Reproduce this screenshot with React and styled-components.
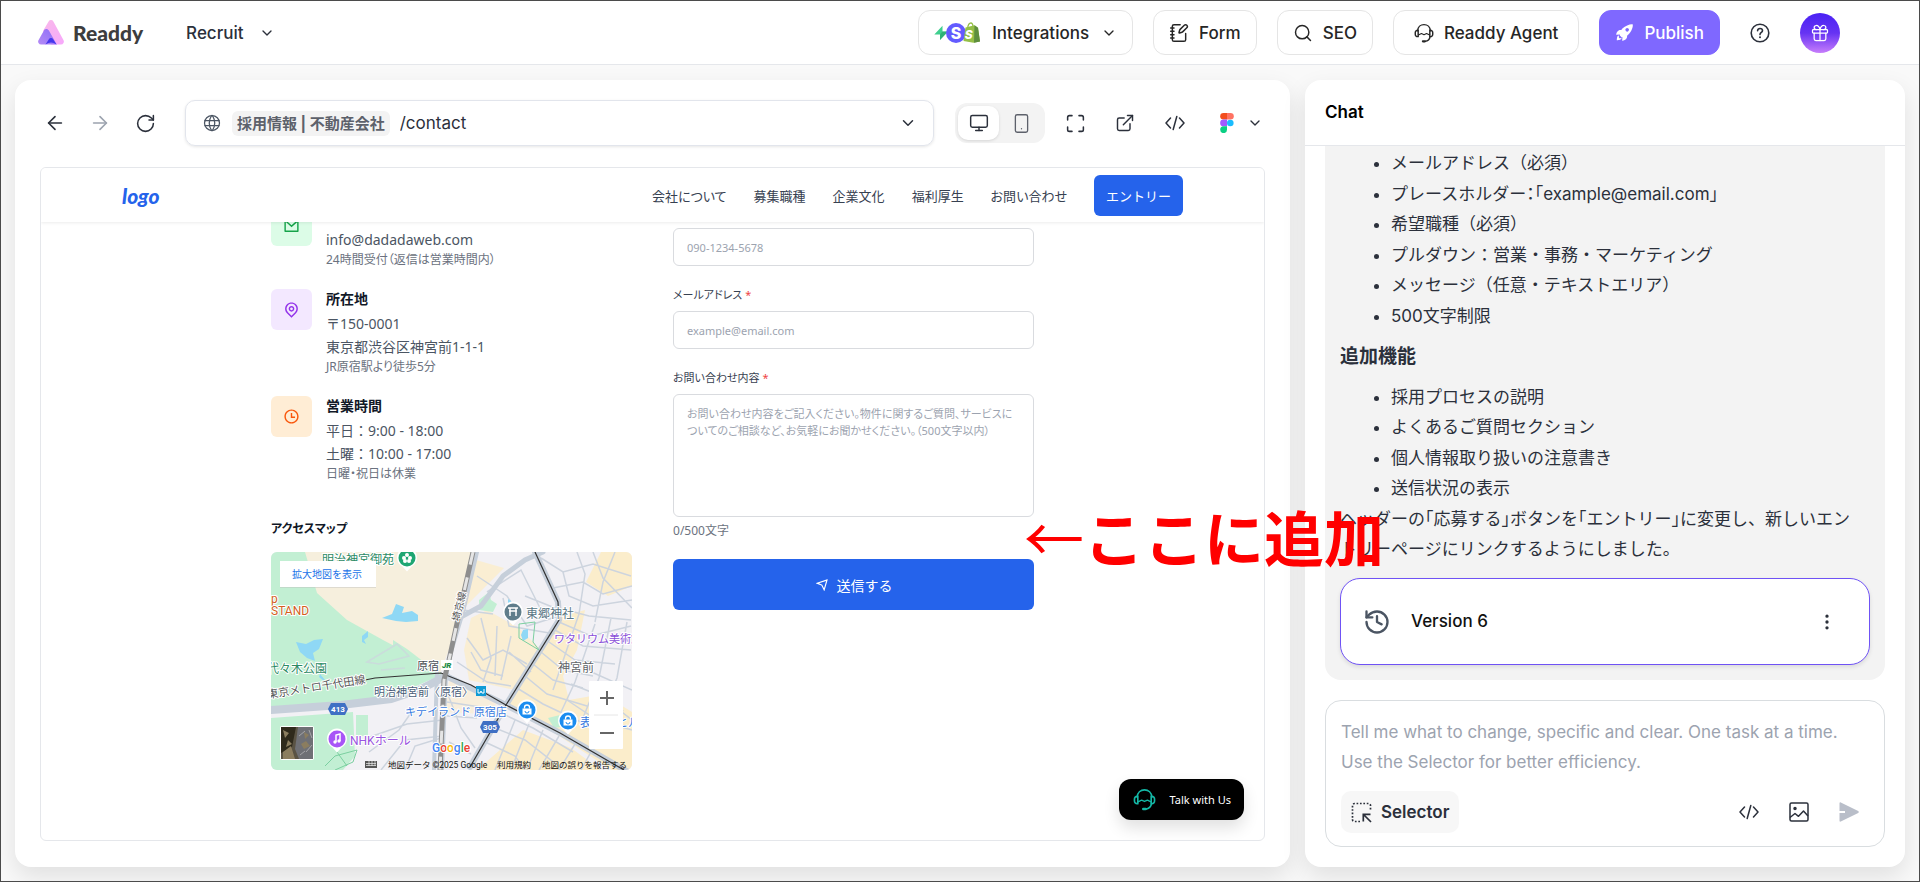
import React, { useState } from "react";
import styled, { createGlobalStyle, css } from "styled-components";
import {
  ArrowLeft,
  ArrowRight,
  RotateCw,
  ChevronDown,
  Monitor,
  Smartphone,
  Maximize,
  ExternalLink,
  Search,
  NotebookPen,
  Gift,
  History,
  EllipsisVertical
} from "lucide-react";
import { RiMailLine, RiMapPinLine, RiTimeLine, RiSendPlaneLine } from "react-icons/ri";
import { TbWorld } from "react-icons/tb";
import { IoRocketSharp } from "react-icons/io5";

const uiFont = `Inter, "Noto Sans CJK JP", sans-serif`;
const siteFont = `"Noto Sans", "Noto Sans CJK JP", sans-serif`;

const GlobalStyle = createGlobalStyle`
  *, *::before, *::after {
    box-sizing: border-box;
  }
  body {
    margin: 0;
    font-family: ${uiFont};
    color: #2b303b;
  }
  button, input, textarea {
    font-family: inherit;
    font-size: inherit;
    color: inherit;
  }
  button {
    padding: 0;
    border: 0;
    background: none;
    cursor: pointer;
  }
`;

/* ---------- shell ---------- */

const Page = styled.div`
  display: flex;
  flex-direction: column;
  height: 100vh;
  min-height: 700px;
  border: 1px solid #4b4b4b;
  background: #f9f9f9;
  overflow: hidden;
`;

const TopBar = styled.header`
  display: flex;
  align-items: center;
  height: 64px;
  flex-shrink: 0;
  padding: 0 79px 0 37px;
  background: #fff;
  border-bottom: 1px solid #e5e7eb;
  font-size: 17px;
  font-weight: 500;
`;

const Brand = styled.a`
  display: flex;
  align-items: center;
  gap: 9px;
  color: #3d3d3d;
  font-family: Lato, sans-serif;
  font-size: 21px;
  font-weight: 900;
  text-decoration: none;
`;

const ProjectButton = styled.button`
  display: flex;
  align-items: center;
  gap: 15px;
  margin-left: 43px;
  font-weight: 500;
`;

const TopActions = styled.div`
  display: flex;
  align-items: center;
  gap: 20px;
  margin-left: auto;
`;

const TopButton = styled.button`
  display: flex;
  align-items: center;
  gap: ${props => (props.$menu ? "12px" : "10px")};
  height: 45px;
  padding: 0 ${props => (props.$wide ? "20px" : "15px")};
  border: 1px solid #e5e5e5;
  border-radius: 12px;
  background: #fff;
  color: #262626;
  font-weight: 500;
  ${props =>
    props.$primary &&
    css`
      border-color: #7f68ff;
      background: #7f68ff;
      color: #fff;
    `}
`;

const HelpButton = styled.button`
  display: flex;
  margin: 0 10px;
`;

const GiftButton = styled.button`
  display: flex;
  align-items: center;
  justify-content: center;
  width: 40px;
  height: 40px;
  border-radius: 50%;
  background: linear-gradient(#4a22f4 0%, #6633f3 50%, #c77dfb 100%);
  color: #fff;
`;

const Main = styled.main`
  display: flex;
  flex: 1;
  gap: 15px;
  min-height: 0;
  padding: 15px 14px 14px;
`;

const Panel = styled.section`
  display: flex;
  flex-direction: column;
  min-width: 0;
  min-height: 0;
  border-radius: 16px;
  background: #fff;
  box-shadow: 0 10px 24px rgba(0, 0, 0, 0.1);
`;

/* ---------- preview panel ---------- */

const PreviewPanel = styled(Panel)`
  flex: 1;
  gap: 21px;
  padding: 20px 25px 26px;
`;

const Toolbar = styled.div`
  display: flex;
  align-items: center;
  gap: 21px;
`;

const NavButtons = styled.div`
  display: flex;
  gap: 15px;
  margin-right: 4px;
`;

const IconButton = styled.button`
  display: flex;
  align-items: center;
  justify-content: center;
  width: 30px;
  height: 30px;
  color: ${props => (props.disabled ? "#9ca3af" : "#2b303b")};
`;

const AddressBar = styled.div`
  display: flex;
  align-items: center;
  flex: 1;
  min-width: 0;
  height: 46px;
  padding: 0 16px;
  border: 1px solid #e2e5ec;
  border-radius: 10px;
  box-shadow: 0 1px 3px rgba(0, 0, 0, 0.1);
  color: #4b5563;
`;

const SiteChip = styled.span`
  margin: 0 10px;
  padding: 0 5px;
  border-radius: 6px;
  background: #f3f3f3;
  color: #5d616b;
  font-size: 15px;
  font-weight: 700;
  line-height: 25px;
  white-space: nowrap;
`;

const PathInput = styled.input`
  flex: 1;
  min-width: 0;
  padding: 0;
  border: 0;
  outline: none;
  background: none;
  color: #2b303b;
  font-size: 17px;
`;

const DeviceSwitch = styled.div`
  display: flex;
  align-items: center;
  gap: 2px;
  padding: 3px;
  border-radius: 12px;
  background: #f3f3f3;
`;

const DeviceButton = styled.button`
  display: flex;
  align-items: center;
  justify-content: center;
  width: 41px;
  height: 34px;
  border-radius: 10px;
  color: #5d616b;
  ${props =>
    props.$active &&
    css`
      background: #fff;
      box-shadow: 0 1px 3px rgba(0, 0, 0, 0.12);
      color: #2b303b;
    `}
`;

const ToolIcons = styled.div`
  display: flex;
  align-items: center;
  gap: 20px;
  margin-left: -6px;
`;

const FigmaButton = styled.button`
  display: flex;
  align-items: center;
  gap: 13px;
  padding: 0 2px 0 10px;
`;

const Frame = styled.div`
  position: relative;
  flex: 1;
  min-height: 0;
  overflow: hidden;
  border: 1px solid #e5e7eb;
  border-radius: 6px;
  font-family: ${siteFont};
  font-size: 14px;
  color: #374151;
`;

const SiteHeader = styled.header`
  position: relative;
  z-index: 1;
  display: flex;
  justify-content: center;
  background: #fff;
  box-shadow: 0 1px 3px rgba(0, 0, 0, 0.08);
`;

const SiteHeaderInner = styled.div`
  display: flex;
  align-items: center;
  justify-content: space-between;
  flex: 1;
  max-width: 1061px;
  height: 54px;
`;

const SiteLogo = styled.a`
  color: #2563eb;
  font-family: Lato, sans-serif;
  font-size: 21px;
  font-style: italic;
  font-weight: 900;
  text-decoration: none;
`;

const SiteNav = styled.nav`
  display: flex;
  align-items: center;
  gap: 27px;
  font-size: 13px;
  font-feature-settings: "palt";

  a {
    color: #374151;
    text-decoration: none;
  }
`;

const EntryButton = styled.button`
  width: 89px;
  height: 41px;
  border-radius: 6px;
  background: #2563eb;
  color: #fff;
`;

const SiteBody = styled.div`
  display: grid;
  grid-template-columns: 1fr 1fr;
  gap: 41px;
  max-width: 763px;
  /* scrolled so that the first rows pass under the header */
  margin: -17px auto 0;
`;

const ContactList = styled.div`
  display: flex;
  flex-direction: column;
  gap: 20px;
`;

const ContactItem = styled.div`
  display: flex;
  align-items: flex-start;
  gap: 14px;
`;

const ContactBadge = styled.span`
  display: flex;
  align-items: center;
  justify-content: center;
  width: 41px;
  height: 41px;
  border-radius: 6px;
  background: ${props => props.$bg};
  color: ${props => props.$color};
`;

const ContactText = styled.div`
  color: #4b5563;
  font-size: 14px;
  line-height: 23px;
`;

const ContactTitle = styled.h3`
  height: 20px;
  margin: 0 0 3px;
  color: #111827;
  font-size: 14px;
  font-weight: 700;
  line-height: 20px;
`;

const ContactNote = styled.div`
  color: #6b7280;
  font-size: 12px;
  line-height: 18px;
  font-feature-settings: "palt";
`;

const MapTitle = styled.h3`
  margin: 36px 0 13px;
  color: #111827;
  font-size: 12px;
  font-weight: 700;
  line-height: 20px;
  font-feature-settings: "palt";
`;

const MapBox = styled.div`
  height: 218px;
  overflow: hidden;
  border-radius: 6px;

  svg {
    display: block;
    width: 100%;
    height: 100%;
  }
`;

const ContactForm = styled.form`
  display: flex;
  flex-direction: column;
  padding-top: 23px;
`;

const FieldLabel = styled.label`
  margin: 19px 0 6px;
  color: #374151;
  font-size: 11px;
  line-height: 20px;
  font-feature-settings: "palt";
`;

const Required = styled.span`
  margin-left: 3px;
  color: #ef4444;
`;

const fieldStyle = css`
  width: 100%;
  padding: 0 13px;
  border: 1px solid #d9dbdf;
  border-radius: 6px;
  outline: none;
  background: #fff;
  font-size: 11px;

  &::placeholder {
    color: #9ca3af;
    opacity: 1;
  }
`;

const TextField = styled.input`
  ${fieldStyle}
  height: 38px;
`;

const MessageField = styled.textarea`
  ${fieldStyle}
  height: 123px;
  padding: 10px 13px;
  line-height: 17px;
  font-feature-settings: "palt";
  resize: none;
`;

const Counter = styled.div`
  margin-top: 6px;
  color: #6b7280;
  font-size: 12px;
  line-height: 16px;
`;

const SubmitButton = styled.button`
  display: flex;
  align-items: center;
  justify-content: center;
  gap: 8px;
  height: 51px;
  margin-top: 20px;
  border-radius: 6px;
  background: #2563eb;
  color: #fff;
  font-size: 14px;
`;

const TalkButton = styled.button`
  position: absolute;
  right: 20px;
  bottom: 20px;
  display: flex;
  align-items: center;
  gap: 14px;
  height: 41px;
  padding: 0 13px 0 14px;
  border-radius: 12px;
  background: #000;
  box-shadow: 0 8px 16px rgba(0, 0, 0, 0.12);
  color: #fff;
  font-size: 11px;

  svg {
    color: #14b8a6;
  }
`;

/* ---------- chat panel ---------- */

const ChatPanel = styled(Panel)`
  flex: 0 0 600px;
`;

const ChatTitle = styled.h2`
  flex-shrink: 0;
  margin: 0;
  padding: 0 20px;
  border-bottom: 1px solid #e5e7eb;
  color: #000;
  font-size: 17px;
  font-weight: 600;
  line-height: 65px;
`;

const ChatBody = styled.div`
  display: flex;
  flex-direction: column;
  flex: 1;
  gap: 20px;
  min-height: 0;
  padding: 0 20px 20px;
`;

const Bubble = styled.div`
  display: flex;
  flex-direction: column;
  justify-content: flex-end;
  flex: 1;
  min-height: 0;
  overflow: hidden;
  padding: 0 15px 15px;
  border-radius: 0 0 16px 16px;
  background: #f3f3f3;
  font-size: 17px;
  line-height: 1.8;
`;

const BulletList = styled.ul`
  margin: 0;
  padding-left: 51px;
`;

const BubbleHeading = styled.h3`
  margin: 10px 0;
  font-size: 19px;
  line-height: 30px;
  font-weight: 700;
`;

const BubbleText = styled.p`
  margin: 0;
  padding-right: 12px;
  line-height: 30px;
`;

const Quote = styled.span`
  font-feature-settings: "halt";
`;

const VersionCard = styled.div`
  display: flex;
  align-items: center;
  gap: 20px;
  height: 87px;
  flex-shrink: 0;
  margin-top: 14px;
  padding: 0 27px 0 22px;
  border: 1px solid #6f52f5;
  border-radius: 20px;
  background: #fff;
  box-shadow: 0 2px 4px rgba(0, 0, 0, 0.1);
  color: #111;
  font-size: 17px;
  font-weight: 500;
`;

const MoreButton = styled(IconButton)`
  margin-left: auto;
`;

const Composer = styled.form`
  flex-shrink: 0;
  height: 147px;
  padding: 16px 15px 12px;
  border: 1px solid #d9dde0;
  border-radius: 16px;
`;

const Prompt = styled.textarea`
  display: block;
  width: 100%;
  height: 60px;
  margin-bottom: 14px;
  padding: 0;
  border: 0;
  outline: none;
  resize: none;
  font-size: 17px;
  line-height: 30px;

  &::placeholder {
    color: #9ca3af;
    opacity: 1;
  }
`;

const ComposerActions = styled.div`
  display: flex;
  align-items: center;
  gap: 20px;
  padding-right: 5px;
`;

const SelectorButton = styled.button`
  display: flex;
  align-items: center;
  gap: 9px;
  height: 42px;
  margin-right: auto;
  padding: 0 10px;
  border-radius: 10px;
  background: #f7f7f7;
  font-size: 17px;
  font-weight: 600;
`;

/* ---------- marked-up note over the page ---------- */

const Callout = styled.div`
  position: absolute;
  top: 492px;
  right: 536px;
  color: #f00;
  font-family: "Noto Sans CJK JP", sans-serif;
  font-size: 60px;
  font-weight: 700;
  line-height: 88px;
  white-space: nowrap;
  pointer-events: none;
`;

const CalloutArrow = styled.span`
  font-weight: 400;
`;

/* ---------- drawings ---------- */

const BrandMark = () => (
  <svg width="26" height="25" viewBox="0 0 26 25">
    <defs>
      <linearGradient id="markPink" x1="0" y1="0" x2="1" y2="1">
        <stop offset="0" stopColor="#f9b9ea" />
        <stop offset="1" stopColor="#f7a8fb" />
      </linearGradient>
      <linearGradient id="markViolet" x1="0" y1="1" x2="1" y2="0">
        <stop offset="0" stopColor="#b58bf5" />
        <stop offset="1" stopColor="#8a6cf8" />
      </linearGradient>
    </defs>
    <path d="M10.6 1.4a2.8 2.8 0 0 1 4.8 0l10 18.6a3 3 0 0 1-2.5 4.6H13L5 11z" fill="url(#markPink)" />
    <path d="M6.5 9.6c1.5-1.2 3.4-.8 4.4.9l7.9 14.1H3.2A3 3 0 0 1 .6 20z" fill="url(#markViolet)" />
    <path d="M7.5 24.6l3.2-5.2a2.6 2.6 0 0 1 4.6 0l3.2 5.2c-2-1.3-3.7-2-5.5-2s-3.5.7-5.5 2z" fill="#4636ee" />
  </svg>
);

const IntegrationLogos = () => (
  <svg width="46" height="22" viewBox="0 0 46 22" aria-hidden="true">
    <path d="M8.5 3.8v5.800H14L6 18v-5.600H.3z" fill="#3ecf8e" />
    <path d="M6 12.4V18l8-8.400H8.500z" fill="#249d68" opacity=".6" />
    <circle cx="22" cy="11" r="10" fill="#635bff" />
    <text x="22" y="17" textAnchor="middle" fontFamily="Inter" fontWeight="800" fontSize="16" fill="#fff">
      S
    </text>
    <path d="M31.500 5.500l9-2.300 3.500 2.600L46 19.500l-6.500 1.300L29.500 19z" fill="#95bf47" />
    <path d="M40.500 3.200l3.500 2.600L46 19.500l-6 1.300z" fill="#5e8e3e" />
    <path d="M33.500 6.500c.5-3.500 2-5.500 3.400-5.500 1.300 0 2 1.700 2.200 4" fill="none" stroke="#95bf47" strokeWidth="1.300" />
    <text x="34.800" y="17" textAnchor="middle" fontFamily="Inter" fontWeight="800" fontSize="12" fontStyle="italic" fill="#fff">
      S
    </text>
  </svg>
);

const Headset = ({ size = 20 }) => (
  <svg
    width={size}
    height={size}
    viewBox="0 0 22 22"
    fill="none"
    stroke="currentColor"
    strokeWidth="1.6"
    strokeLinecap="round"
    strokeLinejoin="round"
  >
    <path d="M4 8.500C4.300 4.500 7.200 1.800 11 1.800s6.700 2.700 7 6.700" />
    <path d="M4.600 8H4a2.600 2.600 0 0 0-2.600 2.700v1.600A2.600 2.600 0 0 0 4 15h.6z" />
    <path d="M17.400 8h.6a2.600 2.600 0 0 1 2.600 2.700v1.600A2.600 2.600 0 0 1 18 15h-.6z" />
    <path d="M4.800 13.200l3.400-1.600 2.800 1.300 2.800-1.300 3.400 1.600" strokeWidth="1.300" />
    <path d="M17.600 15.200c-.4 2.700-2.600 4.600-5.400 5" />
    <path d="M9.800 20.200h2.200" strokeWidth="2.400" />
  </svg>
);

const HelpIcon = () => (
  <svg
    width="20"
    height="20"
    viewBox="0 0 20 20"
    fill="none"
    stroke="currentColor"
    strokeWidth="1.600"
    strokeLinecap="round"
    strokeLinejoin="round"
  >
    <circle cx="10" cy="10" r="8.800" />
    <path d="M7.600 7.800C7.600 6.400 8.600 5.500 10 5.500s2.500.9 2.500 2.200c0 1.700-2.500 1.900-2.500 3.900" />
    <path d="M10 14.200v.1" strokeWidth="2" />
  </svg>
);

const CodeIcon = () => (
  <svg
    width="20"
    height="16"
    viewBox="0 0 20 16"
    fill="none"
    stroke="currentColor"
    strokeWidth="1.500"
    strokeLinecap="round"
    strokeLinejoin="round"
  >
    <path d="M5.500 3L1 8l4.500 5M14.500 3L19 8l-4.500 5M11.800 1.500L8.200 14.500" />
  </svg>
);

const FigmaLogo = () => (
  <svg width="14" height="20" viewBox="0 0 14 20">
    <path d="M3.500 0H7v6.600H3.500a3.300 3.300 0 0 1 0-6.600z" fill="#f24e1e" />
    <path d="M7 0h3.500a3.300 3.300 0 0 1 0 6.600H7z" fill="#ff7262" />
    <path d="M3.500 6.600H7v6.700H3.500a3.300 3.300 0 0 1 0-6.700z" fill="#a259ff" />
    <circle cx="10.300" cy="10" r="3.300" fill="#1abcfe" />
    <path d="M3.500 13.300H7v3.400a3.400 3.400 0 1 1-3.500-3.400z" fill="#0acf83" />
  </svg>
);

const SelectorIcon = () => (
  <svg width="21" height="21" viewBox="0 0 21 21" fill="none" stroke="currentColor" strokeWidth="1.700">
    <path
      d="M9 19.500H3.500a2 2 0 0 1-2-2v-14a2 2 0 0 1 2-2h14a2 2 0 0 1 2 2V9"
      strokeDasharray="1.700 1.700"
    />
    <path d="M12.300 19.500v-7.200h7.200M12.500 12.500l7.500 7.500" />
  </svg>
);

const ImageIcon = () => (
  <svg
    width="20"
    height="20"
    viewBox="0 0 20 20"
    fill="none"
    stroke="currentColor"
    strokeWidth="1.500"
    strokeLinejoin="round"
  >
    <rect x="1" y="1" width="18" height="18" rx="1.500" />
    <path d="M1 15.500l5-4 3.500 2.800 5-5.300 4.500 5" />
    <circle cx="6" cy="6.500" r="1" fill="currentColor" />
  </svg>
);

const SendIcon = () => (
  <svg width="20" height="20" viewBox="0 0 20 20" fill="#b9bec9">
    <path d="M.5 1.300C.5.500 1 0 1.800.4l17.400 8.700c.8.400.8 1.400 0 1.800L1.800 19.600c-.8.400-1.300-.1-1.300-.9V11H6V9H.5z" />
  </svg>
);

const MapPin = ({ x, y, color, children }) => (
  <g transform={`translate(${x} ${y})`}>
    <path d="M0 13.500l-4.500-5A10 10 0 1 1 4.500 8.500z" fill="#fff" />
    <circle r="8.500" fill={color} />
    {children}
  </g>
);

const ShopBag = () => (
  <g>
    <rect x="-4.500" y="-1.500" width="9" height="6" fill="#fff" />
    <path d="M-2.500-1.500v-1a2.500 2.500 0 0 1 5 0v1" fill="none" stroke="#fff" strokeWidth="1.300" />
    <path d="M-2 1a2 2 0 0 0 4 0" fill="none" stroke="#1a8cf0" />
  </g>
);

const RouteShield = ({ x, y, label }) => (
  <g transform={`translate(${x} ${y})`}>
    <path d="M-7-6H7l3 6-3 6H-7l-3-6z" fill="#3f6fc4" />
    <text y="3" textAnchor="middle" fontSize="8" fontWeight="700" fill="#fff" stroke="none">
      {label}
    </text>
  </g>
);

const AccessMap = () => (
  <svg
    viewBox="0 0 361 218"
    preserveAspectRatio="xMidYMid slice"
    fontFamily={`Roboto, "Noto Sans CJK JP", sans-serif`}
    fontSize="12"
  >
    <rect width="361" height="218" fill="#f2f1f5" />
    {/* commercial blocks */}
    <g fill="#fbedcb">
      <path d="M205 8l28 8-30 30-12 12 6-30zM200 66l16-8 32 18 22 22 10 30-36 10-46-10-5-30z" opacity=".8" />
      <path d="M286 66l28-8-8 40-14 26 6 24 34-6 29 18v58h-20L238 152z" />
      <path d="M330 0h31v34l-24 10-22-14zM252 178l48 18 30 22H206z" />
      <path d="M178 128l48 24-14 10-38-2z" opacity=".6" />
    </g>
    {/* parks */}
    <path d="M0 0h40l24 42 28 26 30 18 20 16 30 20-40 18-26 10L0 156z" fill="#c2efd3" />
    <path d="M34 0h167l-12 55-10 40-10 26-30-4-10-20-17-9-36-20-30-27z" fill="#f6efdd" />
    <path d="M122 88l14 9 34 26-20 8-28-16z" fill="#c2efd3" />
    <path d="M0 166l82-6 2 44-12 14H0zM85 163h12v20l-12 2z" fill="#c2efd3" />
    <path d="M208 48l10-8 2 8 6 4-4 8-14-2z" fill="#c2efd3" />
    <path d="M277 166l16-4 4 12-14 2z" fill="#c2efd3" />
    {/* side streets */}
    <g fill="none" stroke="#cdd4de" strokeWidth="1.500">
      <path d="M270 6l22 14 30-8 38 12M282 36l30-6 20 12 29-8M292 20l6 24 24 10 39-6M306 0l8 22-6 40M322 0l10 26 29 30M344 0l-12 30-8 40M288 56l30 8 42 4M288 70l32 14 40-10M284 78l28 16 48 4M278 90l26 18 40 4M270 100l22 18 30 6M262 112l20 16 30 8M254 124l22 18 40 12M246 136l26 16 38 18M308 62l-26 76M324 72l-20 58-14 30M340 66l-12 60-16 40M356 70l-10 56-20 46" />
      <path d="M196 86l16 22 20-10 24 14M200 100l10 18 22 6M210 66l10 40-8 24M226 74l-2 50M240 84l-10 44M186 110l30 20 24 4M206 24l30 20 20 30 32-10M216 40l34-22 20 40M232 46l6 28 46 8M192 58l30 4M254 44l30 12M238 100l22 20" />
      <path d="M232 162l30 14 40 24M224 176l30 12 36 28M214 190l30 14 10 14M244 168l-20 50M258 172l-18 46M272 178l-16 40M288 184l-20 34M304 192l-16 26M320 200l-10 18M300 132l30 12 31 24M316 118l45 20M296 148l30 20 35 10M318 174l20-30M340 184l12-26" />
      <path d="M96 186l40-14 36-4M98 200l30-22 14-20M110 218l24-30 38-4M134 218l10-24 26-8M176 150l40 6M176 164l30 2M178 190l22 12M176 140l14 36 14 20" />
      <path d="M96 110l30-18 12 12-30 8zM110 118l24-2" opacity=".7" />
    </g>
    {/* main roads */}
    <g fill="none" stroke="#c6cfda" strokeLinecap="round">
      <path d="M0 158l70-5 50-6 30-10 25-13" strokeWidth="8" />
      <path d="M175 124l60 29 54 28 70 40" strokeWidth="6" />
      <path d="M264 0l23 50 1 18-53 85-36 62" strokeWidth="6" />
      <path d="M188 66l22-12 22-30 22-16 18-8" strokeWidth="5" />
      <path d="M206 0l-14 60-12 40-5 24-4 94" strokeWidth="4" />
      <path d="M166 120l-3 98" strokeWidth="4" />
    </g>
    <g fill="none" stroke="#333" strokeWidth="1.200">
      <path d="M84 130l20-4 66-5 30 12 35 20 54 28 64 37" />
      <path d="M264 0l23 50 1 18-53 85-36 62" />
    </g>
    <path d="M202 0l-14 62-10 46-5 20-4 90" fill="none" stroke="#8e8e8e" strokeWidth="5" />
    <path d="M202 0l-14 62-10 46-5 20-4 90" fill="none" stroke="#e5e5e5" strokeWidth="3" strokeDasharray="13 13" />
    {/* water */}
    <g fill="#8fd8f5">
      <path d="M111 66l10-4 4-10 8 3-2 6 10-2 6 4v6l-12 1-10-1z" />
      <path d="M25 90l10 2 8-4 9-1-4 10-6 4 2 8-8-3-7-6z" />
      <path d="M91 84l6-5v6l-4 3 2 4-4-2zM49 122l5 6-1 1-5-4zM252 78l5-1v9l-5 3-2-6zM237 47l3 2 1 7-4-4z" />
    </g>
    <path d="M248 72l16-2-2 20 6 8-20-12zM54 214l10-10 22-6-4 12-18 8M66 200l10 14" fill="none" stroke="#7bcfa0" strokeWidth="1" />

    {/* labels */}
    <g stroke="#fff" strokeWidth="2" paintOrder="stroke" strokeLinejoin="round">
      <text x="51" y="12" fill="#2b8a64">明治神宮御苑</text>
      <text x="0" y="51" fill="#d35f1e">p</text>
      <text x="0" y="63" fill="#d35f1e">STAND</text>
      <text x="-4" y="121" fill="#2b8a64">代々木公園</text>
      <text x="-3" y="146" fontSize="11" fill="#555" transform="rotate(-9 0 146)">東京メトロ千代田線</text>
      <text x="188" y="70" fontSize="10" fill="#555" transform="rotate(-76 188 70)">埼京線</text>
      <text x="255" y="66" fill="#5a7684">東郷神社</text>
      <text x="283" y="91" fontSize="11" fill="#8a4fd8">ワタリウム美術館</text>
      <text x="287" y="120" fill="#606468">神宮前</text>
      <text x="146" y="118" fontSize="11" fill="#4a4f57">原宿</text>
      <text x="103" y="144" fontSize="11" fill="#4a5d78">明治神宮前〈原宿〉</text>
      <text x="134" y="164" fontSize="11" fill="#3a7be0">キデイランド 原宿店</text>
      <text x="309" y="175" fill="#3a7be0">表参道ヒルズ</text>
      <text x="79" y="193" fill="#9a54e0">NHKホール</text>
    </g>
    <rect x="170" y="108" width="12" height="10" fill="#fff" />
    <text x="171" y="116" fontSize="8" fontWeight="900" fontStyle="italic" fill="#1c8a45">JR</text>
    <rect x="205" y="134" width="10" height="10" fill="#0f9bd6" />
    <path d="M207 137v4h2l1-2 1 2h2v-4" fill="none" stroke="#fff" />
    <MapPin x={136} y={6} color="#1fa673">
      <g fill="#fff">
        <circle cy="-3" r="2" />
        <circle cx="3" r="2" />
        <circle cx="-3" r="2" />
        <circle cx="2" cy="3" r="2" />
        <circle cx="-2" cy="3" r="2" />
      </g>
    </MapPin>
    <MapPin x={242} y={60} color="#607d8b">
      <path d="M-5-4H5M-4-1H4M-3-4v8M3-4v8" stroke="#fff" strokeWidth="1.500" />
    </MapPin>
    <MapPin x={256} y={158} color="#1a8cf0">
      <ShopBag />
    </MapPin>
    <MapPin x={297} y={169} color="#1a8cf0">
      <ShopBag />
    </MapPin>
    <MapPin x={66} y={187} color="#a855f7">
      <path d="M-1 3V-4l4-1v7" fill="none" stroke="#fff" strokeWidth="1.500" />
      <circle cx="-2" cy="3" r="1.700" fill="#fff" />
      <circle cx="2" cy="2" r="1.700" fill="#fff" />
    </MapPin>
    <RouteShield x={67} y={157} label="413" />
    <RouteShield x={219} y={175} label="305" />
    <text x="161" y="200" fontSize="12" fontWeight="500" stroke="#fff" strokeWidth="2" paintOrder="stroke">
      <tspan fill="#4285f4">G</tspan>
      <tspan fill="#ea4335">o</tspan>
      <tspan fill="#fbbc04">o</tspan>
      <tspan fill="#4285f4">g</tspan>
      <tspan fill="#34a853">l</tspan>
      <tspan fill="#ea4335">e</tspan>
    </text>

    {/* controls */}
    <rect x="9" y="10" width="96" height="26" fill="#bbb" opacity=".4" />
    <rect x="9" y="9" width="96" height="26" fill="#fff" />
    <text x="21" y="26" fontSize="10" fill="#1a73e8">拡大地図を表示</text>
    <rect x="318" y="129" width="34" height="68" rx="1" fill="#fff" />
    <path d="M323 163h24" stroke="#e6e6e6" />
    <path d="M329 146h14M336 139v14M329 181h14" stroke="#666" strokeWidth="2" />
    <rect x="9" y="174" width="34" height="34" rx="2" fill="#fff" />
    <rect x="10" y="175" width="32" height="32" fill="#5a5344" />
    <path d="M10 175h15l-4 20-11 6z" fill="#2f2a1c" />
    <path d="M27 175h15v32H28l-4-10z" fill="#6f7075" />
    <path d="M12 178l6 3-4 5zM17 188l4 4-6 3zM12 200l8-6 4 13H12zM33 180l5 3-4 4zM30 192l5-3 4 5-6 3z" fill="#8b7d5f" />
    <path d="M28 184l6-5M35 200l6-7M29 203l5-4M38 178l3 8" stroke="#a5a5a8" />
    <path d="M94 209h12v7H94z" fill="#555" />
    <path d="M95 211.500h10M95 213.500h10M98 209v5M101 209v5M104 209v5" stroke="#eee" strokeWidth=".7" />
    <g fontSize="8.500" fill="#111">
      <text x="117" y="216">地図データ ©2025 Google</text>
      <text x="226" y="216">利用規約</text>
      <text x="271" y="216">地図の誤りを報告する</text>
    </g>
  </svg>
);

/* ---------- sections ---------- */

const navLinks = ["会社について", "募集職種", "企業文化", "福利厚生", "お問い合わせ"];

const contacts = [
  {
    icon: RiMailLine,
    bg: "#dcfce7",
    color: "#16a34a",
    lines: ["info@dadadaweb.com"],
    note: "24時間受付（返信は営業時間内）"
  },
  {
    icon: RiMapPinLine,
    bg: "#f3e8ff",
    color: "#9333ea",
    title: "所在地",
    lines: ["〒150-0001", "東京都渋谷区神宮前1-1-1"],
    note: "JR原宿駅より徒歩5分"
  },
  {
    icon: RiTimeLine,
    bg: "#ffedd5",
    color: "#f9560b",
    title: "営業時間",
    lines: ["平日：9:00 - 18:00", "土曜：10:00 - 17:00"],
    note: "日曜・祝日は休業"
  }
];

const Header = () => (
  <TopBar>
    <Brand href="#">
      <BrandMark />
      Readdy
    </Brand>
    <ProjectButton>
      Recruit
      <ChevronDown size={16} />
    </ProjectButton>
    <TopActions>
      <TopButton $menu>
        <IntegrationLogos />
        Integrations
        <ChevronDown size={16} />
      </TopButton>
      <TopButton>
        <NotebookPen size={20} strokeWidth={1.75} />
        Form
      </TopButton>
      <TopButton>
        <Search size={20} strokeWidth={1.75} />
        SEO
      </TopButton>
      <TopButton $wide>
        <Headset />
        Readdy Agent
      </TopButton>
      <TopButton $primary>
        <IoRocketSharp size={19} />
        Publish
      </TopButton>
      <HelpButton aria-label="Help">
        <HelpIcon />
      </HelpButton>
      <GiftButton aria-label="Rewards">
        <Gift size={20} strokeWidth={1.5} />
      </GiftButton>
    </TopActions>
  </TopBar>
);

const PreviewToolbar = () => {
  const [device, setDevice] = useState("desktop");
  return (
    <Toolbar>
      <NavButtons>
        <IconButton aria-label="Back">
          <ArrowLeft size={22} strokeWidth={1.75} />
        </IconButton>
        <IconButton aria-label="Forward" disabled>
          <ArrowRight size={22} strokeWidth={1.75} />
        </IconButton>
        <IconButton aria-label="Reload">
          <RotateCw size={21} strokeWidth={1.75} />
        </IconButton>
      </NavButtons>
      <AddressBar>
        <TbWorld size={20} strokeWidth={1.5} />
        <SiteChip>採用情報 | 不動産会社</SiteChip>
        <PathInput aria-label="Page path" defaultValue="/contact" />
        <ChevronDown size={18} color="#2b303b" />
      </AddressBar>
      <DeviceSwitch>
        <DeviceButton
          aria-label="Desktop"
          $active={device === "desktop"}
          onClick={() => setDevice("desktop")}
        >
          <Monitor size={20} strokeWidth={1.75} />
        </DeviceButton>
        <DeviceButton
          aria-label="Mobile"
          $active={device === "mobile"}
          onClick={() => setDevice("mobile")}
        >
          <Smartphone size={21} strokeWidth={1.5} />
        </DeviceButton>
      </DeviceSwitch>
      <ToolIcons>
        <IconButton aria-label="Full screen">
          <Maximize size={21} strokeWidth={1.75} />
        </IconButton>
        <IconButton aria-label="Open in new tab">
          <ExternalLink size={20} strokeWidth={1.75} />
        </IconButton>
        <IconButton aria-label="Code">
          <CodeIcon />
        </IconButton>
        <FigmaButton aria-label="Export to Figma">
          <FigmaLogo />
          <ChevronDown size={16} />
        </FigmaButton>
      </ToolIcons>
    </Toolbar>
  );
};

const Site = () => {
  const [message, setMessage] = useState("");
  return (
    <Frame>
      <SiteHeader>
        <SiteHeaderInner>
          <SiteLogo href="#">logo</SiteLogo>
          <SiteNav>
            {navLinks.map(link => (
              <a href="#" key={link}>
                {link}
              </a>
            ))}
            <EntryButton>エントリー</EntryButton>
          </SiteNav>
        </SiteHeaderInner>
      </SiteHeader>
      <SiteBody>
        <div>
          <ContactList>
            {contacts.map(({ icon: Icon, bg, color, title, lines, note }) => (
              <ContactItem key={note}>
                <ContactBadge $bg={bg} $color={color}>
                  <Icon size={17} />
                </ContactBadge>
                <ContactText>
                  <ContactTitle>{title}</ContactTitle>
                  {lines.map(line => (
                    <div key={line}>{line}</div>
                  ))}
                  <ContactNote>{note}</ContactNote>
                </ContactText>
              </ContactItem>
            ))}
          </ContactList>
          <MapTitle>アクセスマップ</MapTitle>
          <MapBox>
            <AccessMap />
          </MapBox>
        </div>
        <ContactForm onSubmit={e => e.preventDefault()}>
          <TextField type="tel" aria-label="電話番号" placeholder="090-1234-5678" />
          <FieldLabel htmlFor="email">
            メールアドレス<Required>*</Required>
          </FieldLabel>
          <TextField id="email" type="email" placeholder="example@email.com" />
          <FieldLabel htmlFor="message">
            お問い合わせ内容<Required>*</Required>
          </FieldLabel>
          <MessageField
            id="message"
            maxLength={500}
            value={message}
            onChange={e => setMessage(e.target.value)}
            placeholder="お問い合わせ内容をご記入ください。物件に関するご質問、サービスについてのご相談など、お気軽にお聞かせください。（500文字以内）"
          />
          <Counter>{message.length}/500文字</Counter>
          <SubmitButton type="submit">
            <RiSendPlaneLine size={14} />
            送信する
          </SubmitButton>
        </ContactForm>
      </SiteBody>
      <TalkButton>
        <Headset size={23} />
        Talk with Us
      </TalkButton>
    </Frame>
  );
};

const Chat = () => (
  <ChatPanel>
    <ChatTitle>Chat</ChatTitle>
    <ChatBody>
      <Bubble>
        <BulletList>
          <li>メールアドレス（必須）</li>
          <li>
            プレースホルダー<Quote>：「</Quote>example@email.com<Quote>」</Quote>
          </li>
          <li>希望職種（必須）</li>
          <li>プルダウン：営業・事務・マーケティング</li>
          <li>メッセージ（任意・テキストエリア）</li>
          <li>500文字制限</li>
        </BulletList>
        <BubbleHeading>追加機能</BubbleHeading>
        <BulletList>
          <li>採用プロセスの説明</li>
          <li>よくあるご質問セクション</li>
          <li>個人情報取り扱いの注意書き</li>
          <li>送信状況の表示</li>
        </BulletList>
        <BubbleText>
          ヘッダーの<Quote>「</Quote>応募する<Quote>」</Quote>ボタンを<Quote>「</Quote>エントリー
          <Quote>」</Quote>に変更し、新しいエントリーページにリンクするようにしました。
        </BubbleText>
        <VersionCard>
          <History size={28} color="#4b5563" />
          Version 6
          <MoreButton aria-label="More">
            <EllipsisVertical size={20} />
          </MoreButton>
        </VersionCard>
      </Bubble>
      <Composer onSubmit={e => e.preventDefault()}>
        <Prompt
          aria-label="Message"
          placeholder="Tell me what to change, specific and clear. One task at a time. Use the Selector for better efficiency."
        />
        <ComposerActions>
          <SelectorButton type="button">
            <SelectorIcon />
            Selector
          </SelectorButton>
          <IconButton type="button" aria-label="Insert code">
            <CodeIcon />
          </IconButton>
          <IconButton type="button" aria-label="Add image">
            <ImageIcon />
          </IconButton>
          <IconButton type="submit" aria-label="Send">
            <SendIcon />
          </IconButton>
        </ComposerActions>
      </Composer>
    </ChatBody>
  </ChatPanel>
);

const App = () => (
  <>
    <GlobalStyle />
    <Page>
      <Header />
      <Main>
        <PreviewPanel>
          <PreviewToolbar />
          <Site />
        </PreviewPanel>
        <Chat />
      </Main>
      <Callout>
        <CalloutArrow>←</CalloutArrow>
        ここに追加
      </Callout>
    </Page>
  </>
);

export default App;
